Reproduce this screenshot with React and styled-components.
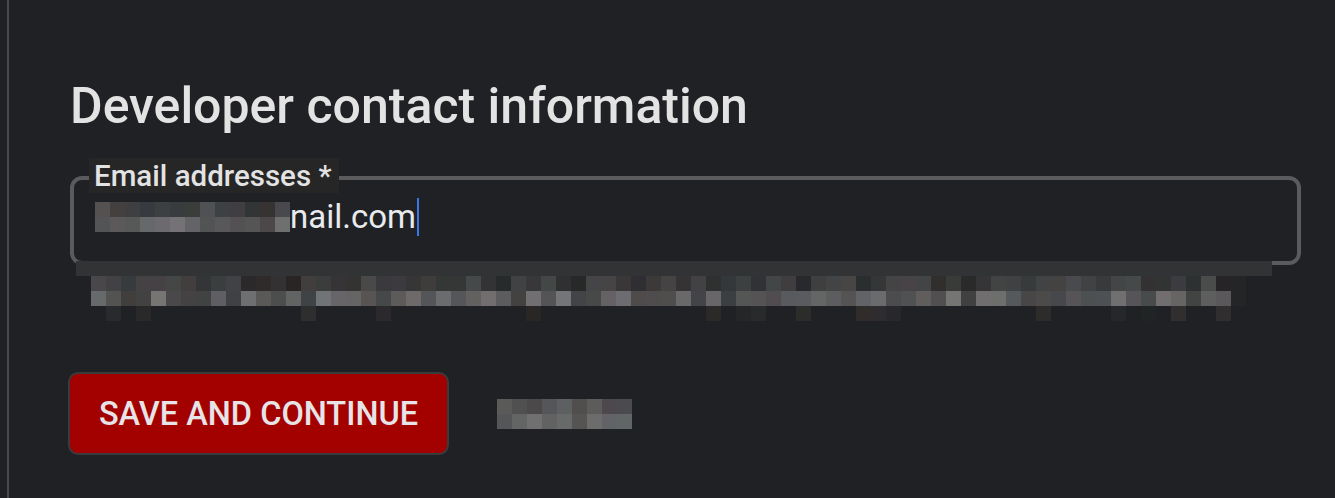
import React from 'react';
import styled, { createGlobalStyle } from 'styled-components';

const GlobalStyle = createGlobalStyle`
    html, body {
        margin: 0;
        padding: 0;
        background: #202124;
    }
    body {
        font-family: Roboto, "Liberation Sans", Arial, sans-serif;
    }
`

const Page = styled.div`
    display: flex;
    min-height: 100vh;
    background: #202124;
`

const Rail = styled.div`
    width: 7px;
    flex-shrink: 0;
    border-right: 2px solid #4a4a4c;
`

const Content = styled.div`
    flex: 1;
    padding: 79px 0 0 61px;
    display: flex;
    flex-direction: column;
`

const Title = styled.h2`
    margin: 0;
    font-size: 50px;
    font-weight: 500;
    line-height: 54px;
    color: #e3e3e3;
`

const Field = styled.div`
    position: relative;
    margin-top: 43px;
    width: 1231px;
    height: 89px;
    box-sizing: border-box;
    border: 4px solid #5b5b5d;
    border-radius: 12px;
    display: flex;
    align-items: center;
    padding-left: 21px;
`

const Label = styled.span`
    position: absolute;
    left: 15px;
    top: -22px;
    padding: 2px 7px 1px 5px;
    background: #262627;
    font-size: 29.5px;
    font-weight: 500;
    line-height: 32px;
    color: #e3e3e3;
`

const Value = styled.div`
    display: flex;
    align-items: center;
    margin-top: -8px;
    font-size: 33px;
    color: #e8eaed;
`

const Caret = styled.span`
    width: 2px;
    height: 38px;
    margin-left: 1px;
    background: #3b78e7;
`

const HintWrap = styled.div`
    position: relative;
    margin-top: -4px;
    display: flex;
    flex-direction: column;
`

const HintBand = styled.div`
    margin-left: 6px;
    width: 1196px;
    height: 15px;
    background: #323335;
`

const MosaicGrid = styled.div`
    display: grid;
    grid-template-columns: repeat(${p => p.$cols}, ${p => p.$cell}px);
    grid-auto-rows: ${p => p.$cell}px;
    margin-left: ${p => p.$indent || 0}px;
`

const Cell = styled.div`
    width: 100%;
    height: 100%;
`

const Actions = styled.div`
    display: flex;
    align-items: center;
    margin-top: 51px;
    margin-left: -2px;
    gap: 48px;
`

const Button = styled.button`
    width: 381px;
    height: 83px;
    background: #a30000;
    border: 2px solid #3a3b3d;
    border-radius: 10px;
    color: #e6e4e6;
    font-family: Roboto, "Liberation Sans", Arial, sans-serif;
    font-size: 32.5px;
    font-weight: 500;
    text-transform: uppercase;
    cursor: pointer;
`

function rand(seed) {
    let s = seed;
    return () => {
        s = (s * 9301 + 49297) % 233280;
        return s / 233280;
    };
}

function grey(r, lo, hi) {
    const v = Math.round(lo + r() * (hi - lo));
    const t = Math.round((r() - 0.5) * 8);
    return `rgb(${v + t}, ${v}, ${v + Math.round((r() - 0.3) * 6)})`;
}

// rows: [{lo, hi, sparse}]
const Mosaic = ({ cols, rows, seed, cell = 15, indent }) => {
    const r = rand(seed);
    const cells = [];
    rows.forEach((row, ri) => {
        for (let c = 0; c < cols; c++) {
            let bg = grey(r, row.lo, row.hi);
            if (row.sparse && r() > row.sparse) bg = 'transparent';
            if (row.fadeEnd && c >= cols - row.fadeEnd) bg = '#242527';
            cells.push(<Cell key={`${ri}-${c}`} style={{ background: bg }} />);
        }
    });
    return (
        <MosaicGrid $cols={cols} $cell={cell} $indent={indent}>
            {cells}
        </MosaicGrid>
    );
};

export default function App() {
    return (
        <>
            <GlobalStyle />
            <Page>
                <Rail />
                <Content>
                    <Title>Developer contact information</Title>

                    <Field>
                        <Label>Email addresses *</Label>
                        <Value>
                            <Mosaic
                                cols={13}
                                seed={17}
                                rows={[
                                    { lo: 50, hi: 85 },
                                    { lo: 70, hi: 120 },
                                ]}
                            />
                            <span>nail.com</span>
                            <Caret />
                        </Value>
                    </Field>

                    <HintWrap>
                        <HintBand />
                        <Mosaic
                            cols={77}
                            seed={42}
                            indent={21}
                            rows={[
                                { lo: 36, hi: 75, fadeEnd: 1 },
                                { lo: 62, hi: 118, fadeEnd: 1 },
                                { lo: 36, hi: 46, sparse: 0.2 },
                            ]}
                        />
                    </HintWrap>

                    <Actions>
                        <Button>Save and continue</Button>
                        <Mosaic
                            cols={9}
                            seed={7}
                            rows={[
                                { lo: 70, hi: 110 },
                                { lo: 80, hi: 112 },
                            ]}
                        />
                    </Actions>
                </Content>
            </Page>
        </>
    );
}
